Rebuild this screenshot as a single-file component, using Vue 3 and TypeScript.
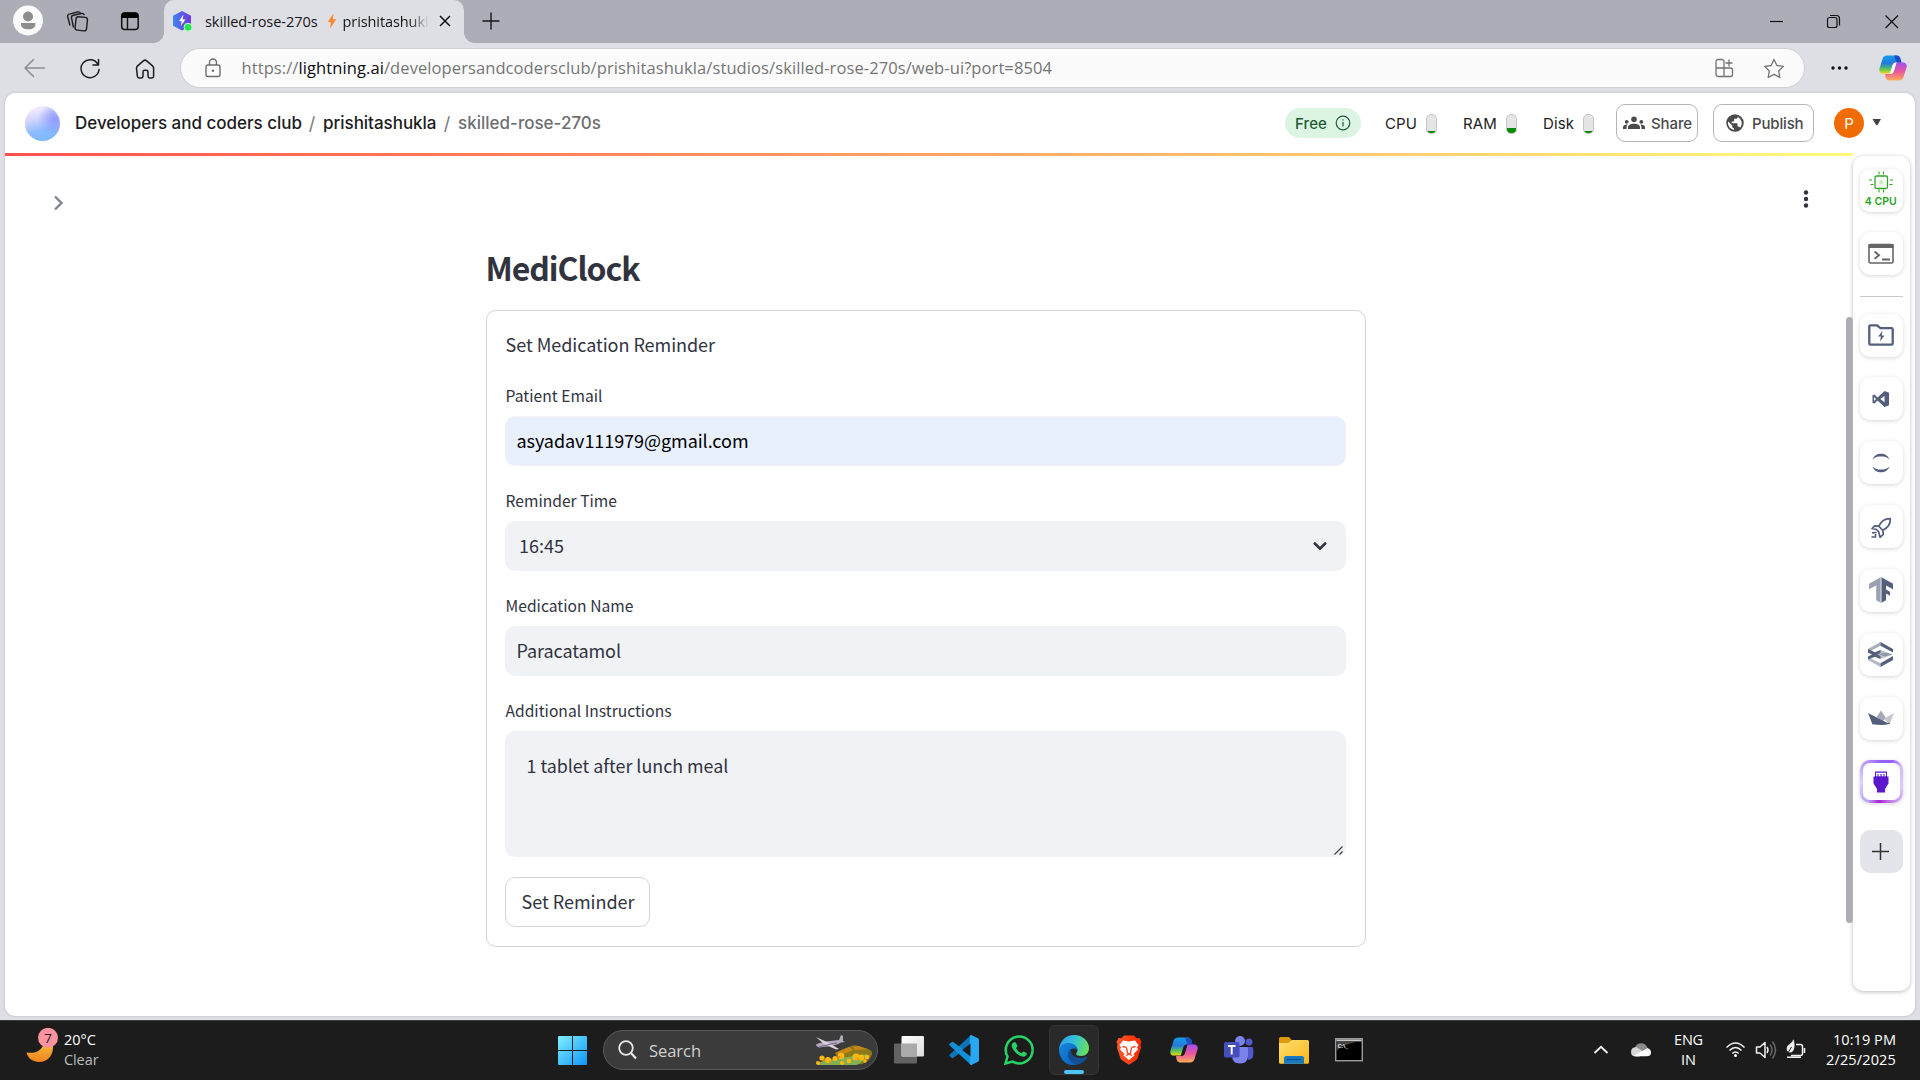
<script setup lang="ts">
import type { Directive } from 'vue'

// Spreads a single-line label over a given width through its letter spacing.
const vFit: Directive<HTMLElement, number> = {
  mounted(el, { value }) {
    const range = document.createRange()
    range.selectNodeContents(el)
    const natural = range.getBoundingClientRect().width
    const count = (el.textContent ?? '').trim().length
    el.style.letterSpacing = `${(value - natural) / count}px`
  },
}

interface Meter { label: string; width: number; level: number; cell: number; gauge: number }
const meters: Meter[] = [
  { label: 'CPU', width: 32, level: 2, cell: 78, gauge: 40.5 },
  { label: 'RAM', width: 34, level: 5, cell: 80, gauge: 42.5 },
  { label: 'Disk', width: 31, level: 2, cell: 73, gauge: 40 },
]
</script>

<template>
  <div class="desktop">
    <header class="tabstrip">
      <svg class="strip-left" width="164" height="43" viewBox="0 0 164 43" fill="none">
        <circle cx="28" cy="20.5" r="15" fill="#fafafa" />
        <circle cx="28" cy="16.5" r="5" fill="#8d8d8d" />
        <path d="M21 23h14.4v1.4c0 3-3 4.900-7.200 4.900s-7.200-1.900-7.200-4.900z" fill="#8d8d8d" />
        <g stroke="#1d1e20" stroke-width="1.400" stroke-linejoin="round">
          <rect x="75.500" y="17" width="11.500" height="13.500" rx="2.500" transform="rotate(6 81 24)" />
          <path d="M73.500 27.500l-2-9.500c-.3-1.500.5-2.500 1.800-2.800l8.400-1.700c1.400-.3 2.300.4 2.700 1.600" />
          <path d="M70 25.500l-2.300-8.700c-.4-1.400.4-2.400 1.600-2.700l8.500-2.100c1.300-.3 2.200.2 2.700 1.300" />
        </g>
        <rect x="121.700" y="13" width="16.500" height="16.500" rx="3" stroke="#111" stroke-width="1.500" />
        <path d="M121.500 18v-2.500a3 3 0 0 1 3-3h10.500a3 3 0 0 1 3 3V18z" fill="#000" />
        <path d="M127.500 18v11.500" stroke="#111" stroke-width="1.400" />
      </svg>
      <div class="tab">
        <svg width="22" height="22" viewBox="0 0 22 22">
          <defs><linearGradient id="fav" x1="0" x2="1"><stop stop-color="#3c86f5" /><stop offset=".5" stop-color="#5a5ae6" /><stop offset="1" stop-color="#7437dd" /></linearGradient></defs>
          <path d="M10 1l9 4.800v10L10 20.500 1 15.800v-10z" fill="url(#fav)" />
          <path d="M11.500 4.500L7 11.200h2.700L8.800 16l4.600-6.500h-2.800z" fill="#fff" />
          <circle cx="16" cy="17.300" r="4" fill="#23e54f" stroke="#c9f5d4" />
        </svg>
        <span v-fit="112.500" class="tab-name">skilled-rose-270s</span>
        <svg width="10" height="16" viewBox="0 0 10 16"><path d="M6.500.5L.7 9h3.100L3 15.500 9.300 6.300H5.800z" fill="#fb8632" /></svg>
        <span class="tab-owner"><span v-fit="94">prishitashukla</span></span>
        <svg class="tab-close" width="12" height="12" viewBox="0 0 12 12"><path d="M1 1l10 10M11 1L1 11" stroke="#111" stroke-width="1.500" /></svg>
      </div>
      <svg class="newtab" width="18" height="18" viewBox="0 0 18 18"><path d="M9 .5v17M.5 9h17" stroke="#161719" stroke-width="1.400" /></svg>
      <svg class="wincontrols" width="130" height="16" viewBox="0 0 130 16" fill="none" stroke="#111" stroke-width="1.200">
        <path d="M0 7.500h13" />
        <rect x="57.500" y="3.500" width="9.500" height="10" rx="2" />
        <path d="M60 1.500h6.500a3 3 0 0 1 3 3v7" />
        <path d="M115.500 1.500l12.500 12.500M128 1.500l-12.500 12.500" />
      </svg>
    </header>

    <nav class="toolbar">
      <svg class="navicons" width="180" height="46" viewBox="0 0 180 46" fill="none" stroke="#1c1d1f" stroke-width="1.500" stroke-linecap="round" stroke-linejoin="round">
        <path d="M44.500 23H25M33.500 14.500L25 23l8.500 8.500" stroke="#8b8d92" />
        <path d="M98 19.500a9 9 0 1 0 1 5M98.500 14.500v5.500H93" />
        <path d="M136.500 23.300c0-1 .4-1.800 1.100-2.400l5.800-5c1-.9 2.300-.9 3.300 0l5.800 5c.7.600 1.100 1.400 1.100 2.400v8c0 1-.7 1.700-1.700 1.700h-2.200c-1 0-1.700-.7-1.700-1.700v-4.300c0-1-.7-1.700-1.700-1.700h-1.600c-1 0-1.700.7-1.700 1.700v4.300c0 1-.7 1.700-1.700 1.700h-2.200c-1 0-1.700-.7-1.700-1.700z" />
      </svg>
      <div class="address">
        <svg width="18" height="20" viewBox="0 0 18 20" fill="none" stroke="#6e6e70" stroke-width="1.400"><rect x="2" y="7" width="14" height="11.500" rx="2" /><path d="M5.500 7V4.500a3.500 3.500 0 0 1 7 0V7" /><circle cx="9" cy="12.700" r="1.200" fill="#6e6e70" stroke="none" /></svg>
        <span v-fit="810.500" class="url">https://<b>lightning.ai</b>/developersandcodersclub/prishitashukla/studios/skilled-rose-270s/web-ui?port=8504</span>
        <svg class="address-actions" width="72" height="22" viewBox="0 0 72 22" fill="none" stroke="#727274" stroke-width="1.300" stroke-linejoin="round">
          <path d="M10 11V4.500a2 2 0 0 0-2-2H4a2 2 0 0 0-2 2V17a2.500 2.500 0 0 0 2.500 2.500h12A2 2 0 0 0 18.500 17.500V13a2 2 0 0 0-2-2H2M10 11v8.500M15 2.500v7M11.500 6h7" />
          <path d="M60 2.500l2.900 6 6.500.9-4.700 4.600 1.100 6.500-5.800-3.100-5.800 3.100 1.100-6.500-4.700-4.600 6.500-.9z" />
        </svg>
      </div>
      <svg class="more" width="20" height="6" viewBox="0 0 20 6" fill="#111"><circle cx="3" cy="3" r="1.700" /><circle cx="9.500" cy="3" r="1.700" /><circle cx="16" cy="3" r="1.700" /></svg>
      <svg width="28" height="28" viewBox="0 0 28 28">
        <defs>
          <linearGradient id="cpA" x1="0" y1="0" x2="0" y2="1"><stop stop-color="#149de8" /><stop offset=".45" stop-color="#2578dc" /><stop offset=".75" stop-color="#5bc45c" /><stop offset="1" stop-color="#f3d516" /></linearGradient>
          <linearGradient id="cpB" x1="0" y1="0" x2="0" y2="1"><stop stop-color="#a74df0" /><stop offset=".5" stop-color="#e6569c" /><stop offset="1" stop-color="#ffac57" /></linearGradient>
        </defs>
        <path d="M8 1.500h9.500c2.500 0 3.500 1.500 4 3.500l1 3.500h-5c-2.300 0-3.500 1-4.100 3L11 19.500H4c-3 0-4.300-2-3.500-5L3.500 5C4.200 2.700 5.500 1.500 8 1.500z" fill="url(#cpA)" />
        <path d="M20 26.500h-9.500c-2.500 0-3.500-1.500-4-3.500l-.5-3h4.500c2.300 0 3.500-1 4.100-3L17 8.500h7c3 0 4.300 2 3.500 5l-3 9.500c-.7 2.300-2 3.500-4.500 3.500z" fill="url(#cpB)" />
        <path d="M13.500 11.500c.6-2 1.800-3 4.100-3L15 17c-.6 2-1.800 3-4.100 3z" fill="#fff" />
        <path d="M15 1.500h2.500c2.500 0 3.500 1.500 4 3.500l1 3.500h-3c-1.500 0-2.500-.8-2.800-2.300z" fill="#1d4cc4" />
      </svg>
    </nav>

    <div class="page">
      <div class="app-header">
        <div class="team"></div>
        <span v-fit="227" class="crumb c1">Developers and coders club</span>
        <span class="slash">/</span>
        <span v-fit="113.500" class="crumb c2">prishitashukla</span>
        <span class="slash">/</span>
        <span v-fit="143" class="crumb current">skilled-rose-270s</span>
        <div class="spacer"></div>
        <div class="free"><span v-fit="32">Free</span>
          <svg width="16" height="16" viewBox="0 0 16 16" fill="none" stroke="#1f5a35" stroke-width="1.200"><circle cx="8" cy="8" r="6.800" /><path d="M8 7v4.500M8 4.300v1.300" /></svg>
        </div>
        <div v-for="m in meters" :key="m.label" class="meter" :style="{ width: m.cell + 'px' }">
          <span v-fit="m.width" class="meter-label" :style="{ width: m.gauge + 'px' }">{{ m.label }}</span>
          <span class="gauge"><i :style="{ height: m.level + 'px' }"></i></span>
        </div>
        <button class="hbtn share">
          <svg width="22" height="14" viewBox="0 0 22 14" fill="#4b4b4b"><circle cx="11" cy="3.300" r="2.800" /><path d="M5 13v-1.500C5 9 7.500 7.800 11 7.800s6 1.200 6 3.700V13z" /><circle cx="3.700" cy="5.800" r="1.900" /><circle cx="18.300" cy="5.800" r="1.900" /><path d="M0 13v-1.700c0-1.700 1.800-2.800 4.600-2.700C3.800 9.500 3.500 10.400 3.500 13zM22 13v-1.700c0-1.700-1.800-2.800-4.600-2.700.8.900 1.100 1.800 1.100 4.400z" /></svg>
          <span v-fit="41">Share</span>
        </button>
        <button class="hbtn publish">
          <svg width="20" height="20" viewBox="0 0 24 24" fill="#4b4b4b"><path d="M12 1.500A10.500 10.500 0 1 0 12 22.500 10.500 10.500 0 0 0 12 1.500zm-1.300 18.900A8.500 8.500 0 0 1 3.500 12c0-.6.100-1.200.2-1.800L8.700 15v1.200c0 1.200 1 2 2 2zm7.300-2.700a2 2 0 0 0-2-1.500h-1v-3c0-.6-.4-1-1-1H8v-2h2c.6 0 1-.5 1-1V7h2.200c1 0 2-1 2-2v-.5A8.500 8.500 0 0 1 18 17.700z" /></svg>
          <span v-fit="51.500">Publish</span>
        </button>
        <div class="user">P</div>
        <svg class="caret" width="10" height="7" viewBox="0 0 10 7"><path d="M.5 0h8.500L5.800 5.600q-1 1-2 0z" fill="#444" /></svg>
      </div>

      <div class="workspace">
        <main class="main">
          <div class="line"></div>
          <div class="main-top">
            <svg width="11" height="16" viewBox="0 0 11 16"><path d="M2 1.500L8.500 8 2 14.500" fill="none" stroke="#808495" stroke-width="2.400" /></svg>
            <svg width="6" height="20" viewBox="0 0 6 20" fill="#31333f"><circle cx="3" cy="3.500" r="2.200" /><circle cx="3" cy="10" r="2.200" /><circle cx="3" cy="16.500" r="2.200" /></svg>
          </div>
          <div class="content">
            <h1 v-fit="154">MediClock</h1>
            <form class="card" @submit.prevent>
              <p v-fit="209.500" class="lead">Set Medication Reminder</p>
              <label><span v-fit="97">Patient Email</span></label>
              <div class="field mail"><span v-fit="232">asyadav111979@gmail.com</span></div>
              <label><span v-fit="111.500">Reminder Time</span></label>
              <div class="field select"><span v-fit="45">16:45</span>
                <svg width="14" height="10" viewBox="0 0 14 10"><path d="M1.800 2.500L7 7.700 12.200 2.500" fill="none" stroke="#31333f" stroke-width="2.600" stroke-linecap="round" /></svg>
              </div>
              <label><span v-fit="128">Medication Name</span></label>
              <div class="field"><span v-fit="104.500">Paracatamol</span></div>
              <label><span v-fit="166">Additional Instructions</span></label>
              <div class="field area"><span>1 tablet after lunch meal</span>
                <svg width="11" height="11" viewBox="0 0 11 11"><path d="M1.500 9.500l8-8M6.500 9.500l3-3" stroke="#444" stroke-width="1.300" /></svg>
              </div>
              <button class="submit"><span v-fit="113">Set Reminder</span></button>
            </form>
          </div>
        </main>
        <div class="scroll"><i></i></div>
        <aside class="side">
          <div class="tool cpu">
            <svg width="26" height="22" viewBox="0 0 26 22" fill="none" stroke="#32a527" stroke-width="1.300"><rect x="7" y="5" width="12.500" height="12.500" rx="1.500" /><circle cx="13.200" cy="11.200" r="2.300" fill="#c6ecc2" stroke="none" /><path d="M11 .5v3M15.500 .5v3M11 18.500v3M15.500 18.500v3M1 9h3M2.500 13.500h3M22 9h3M21.500 13.500h3" stroke-width="1.100" /></svg>
            <span v-fit="32">4 CPU</span>
          </div>
          <div class="tool">
            <svg width="26" height="22" viewBox="0 0 26 22"><rect x="1" y="1.500" width="24" height="18.500" rx="1.500" fill="none" stroke="#666" stroke-width="1.600" /><path d="M.5 1h25v4H.5z" fill="#666" /><path d="M6.500 8.500L11 12.300l-4.500 3.500M14 16.500h8" fill="none" stroke="#666" stroke-width="1.900" /></svg>
          </div>
          <hr />
          <div class="tool">
            <svg width="26" height="22" viewBox="0 0 26 22"><path d="M1.300 2.500a1.200 1.200 0 0 1 1.200-1.200H9l3.500 2.900h11a1.200 1.200 0 0 1 1.200 1.200v14a1.200 1.200 0 0 1-1.200 1.200h-21a1.200 1.200 0 0 1-1.200-1.200z" fill="none" stroke="#545f7c" stroke-width="2.300" /><path d="M14.500 6.800l-4.300 5.800h2.700L12 17.500l4.500-6h-2.800z" fill="#545f7c" /></svg>
          </div>
          <div class="tool">
            <svg width="18" height="16" viewBox="0 0 18 16"><path fill-rule="evenodd" d="M12.500 0L17 1.700v12.600L12.500 16 5.500 9.600 2.500 12.500.5 11.700V4.300l2-.8 3 2.900zM2 5.900v4.200L4 8zm10.500-1.200L8.400 8l4.100 3.300z" fill="#545f7c" /></svg>
          </div>
          <div class="tool">
            <svg width="20" height="20" viewBox="0 0 20 20" fill="#545f7c"><path d="M1.500 6.500C3 2.500 6 .7 10 .7s7 1.800 8.500 5.800C16 4 13.500 3.500 10 3.500S4 4 1.500 6.500zM1.500 13.500c1.500 4 4.500 5.800 8.500 5.800s7-1.800 8.500-5.800C16 16 13.500 16.500 10 16.500S4 16 1.500 13.500z" /></svg>
          </div>
          <div class="tool rocket">
            <svg width="22" height="22" viewBox="0 0 22 22" fill="none" stroke="#545f7c" stroke-width="1.700" stroke-linejoin="round"><path d="M20.300 1.700c-5.300-.3-8.800 2-11.600 7.500l4.100 4.100c5.500-2.800 7.800-6.300 7.500-11.600zM8.700 9.200l-4-.4L2 11.500l5 1.200M12.800 13.300l.5 4-3.300 3-1.200-5.100M7 12.700l2 2.500M6.500 15.500L2 15.800M5.500 17v3H1.500" /></svg>
          </div>
          <div class="tool">
            <svg width="24" height="26" viewBox="0 0 24 26"><path d="M12 0v26l-4.800-2.700V8.500L0 12.300V6.800z" fill="#9aa2b2" /><path d="M12 0l12 6.800v5.500L17 8.500v4l4 2.300v4l-4-2.200v6.700L12 26z" fill="#545f7c" /><path d="M12 0v26" stroke="#d8dbe1" stroke-width="1.200" /></svg>
          </div>
          <div class="tool">
            <svg width="25" height="25" viewBox="0 0 25 25"><path d="M0 7l12.500-7v3.800L3 8.800 0 8z" fill="#a9b0bc" /><path d="M12.500 0L25 7v3.500L12.500 3.800z" fill="#545f7c" /><path d="M0 15l12.500 6.300V25L0 18z" fill="#b4bac5" /><path d="M12.500 25L25 18v-4l-12.500 7.300z" fill="#545f7c" /><path d="M12.500 8L25 12.500 12.500 17 9 12.500z" fill="#bcc1ca" /><path d="M0 7l7 3.200L12.500 8v3l-3 1.500 3 1.500v3L7 14.800 0 17.500v-3l4-2-4-2z" fill="#545f7c" /><path d="M11 12.500l6-1.800 7.500 1.800-7.500 1.700z" fill="#8d95a4" /></svg>
          </div>
          <div class="tool">
            <svg width="26" height="16" viewBox="0 0 26 16"><path d="M8.500 7L13 .5 18 8l-3 3z" fill="#a2a8b4" /><path d="M26 3l-10 5.500 5.500 6z" fill="#c3c7ce" /><path d="M0 3l21.500 11-17 .5z" fill="#545f7c" /><path d="M4 13.500q9 2.800 17.500.3l.5-1z" fill="#545f7c" /></svg>
          </div>
          <div class="tool active">
            <svg width="16" height="22" viewBox="0 0 16 22"><path d="M2 .5h12v5h1.500v7L12 18v3.500H4V18L.5 12.500v-7H2z" fill="#5a17cc" /><path d="M3 1.800h10v3.500H3z" fill="#fff" /><path d="M5 3v2.500M8 3v2.500M11 3v2.500" stroke="#5a17cc" stroke-width="1.100" /></svg>
          </div>
          <div class="tool add">
            <svg width="17" height="17" viewBox="0 0 17 17"><path d="M8.500 0v17M0 8.500h17" stroke="#333" stroke-width="1.500" /></svg>
          </div>
        </aside>
      </div>
    </div>

    <footer class="taskbar">
      <div class="weather">
        <svg width="36" height="40" viewBox="0 0 36 40">
          <defs><linearGradient id="moon" x1="0" y1="0" x2="0" y2="1"><stop stop-color="#f5c13a" /><stop offset="1" stop-color="#f0821e" /></linearGradient></defs>
          <path d="M27 16c1 11-5 18-14 18C7 34 2 30.500 .5 24.500 9 26 16.500 23 18 14z" fill="url(#moon)" />
          <circle cx="22" cy="9.800" r="10" fill="#ff93a0" />
          <text x="22" y="14.600" text-anchor="middle" font-size="13.500" fill="#1a1a1a">7</text>
        </svg>
        <div class="temp"><span v-fit="32">20°C</span><span v-fit="34.500" class="dim">Clear</span></div>
      </div>
      <svg class="start" width="29" height="29" viewBox="0 0 29 29"><defs><linearGradient id="win" x1="0" y1="0" x2="1" y2="1"><stop stop-color="#7ff0ff" /><stop offset="1" stop-color="#0f95f8" /></linearGradient></defs><path d="M1 0h13v14H0V1q0-1 1-1zM15 0h13q1 0 1 1v13H15zM0 15h14v14H1q-1 0-1-1zM15 15h14v13q0 1-1 1H15z" fill="url(#win)" /></svg>
      <div class="search">
        <svg width="19" height="20" viewBox="0 0 19 20" fill="none" stroke="#e6e6e6"><circle cx="8" cy="8" r="6.800" stroke-width="1.800" /><path d="M13 13l5 5.500" stroke-width="2.200" /></svg>
        <span v-fit="52">Search</span>
        <svg class="flora" width="58" height="32" viewBox="0 0 58 32">
          <path d="M20 18q8-4 14-6 5-3 10-.5l8 2q6 2 5 6-4 10-15 10H26z" fill="#8c7a1a" />
          <path d="M38 12l6-1 8 3-12 1zM20 18l14-6 4 3-9 4z" fill="#cc8618" />
          <path d="M2 29q10-6 20-5 14-3 30-5-3 9-11 11H3z" fill="#83b053" />
          <g fill="#fdb910"><circle cx="7" cy="23" r="2.600" /><circle cx="13" cy="25" r="3" /><circle cx="20" cy="23.500" r="2.500" /><circle cx="26" cy="21" r="3.300" /><circle cx="34" cy="26" r="2.300" /><circle cx="41" cy="22" r="3.500" /><circle cx="46" cy="22.500" r="3" /><circle cx="52" cy="22" r="2.300" /><circle cx="3" cy="28" r="2" /><circle cx="27" cy="28" r="2" /><circle cx="50" cy="26" r="1.800" /></g>
          <g fill="#ef9410"><circle cx="15" cy="27" r="1.200" /><circle cx="24" cy="22" r="1.200" /><circle cx="43" cy="24" r="1.200" /><circle cx="9" cy="25" r="1" /></g>
          <path d="M1 9.500q5-2.500 14-3.500l9-1 2-5 2 1v5l2 1-4 .5q-3 2-10 3.500L4 12.500q-3-1-3-3z" fill="#b5aabd" />
          <path d="M1 2l13 6 10 6-3 .5L9 9z" fill="#ddd2df" /><path d="M4 12l12-3 6-1" stroke="#76698a" fill="none" />
        </svg>
      </div>
      <div class="apps">
        <div class="app"><svg width="30" height="28" viewBox="0 0 30 28"><defs><linearGradient id="tv" x1="0" y1="0" x2="1" y2="1"><stop stop-color="#fff" /><stop offset="1" stop-color="#dcdcdc" /></linearGradient></defs><rect x="0" y="7.500" width="23" height="20" rx="1" fill="#626262" /><rect x="7.500" y="0" width="22.500" height="20.500" rx="1" fill="url(#tv)" /><path d="M7.500 7.500H23v13H8.500q-1 0-1-1z" fill="#aaa" /></svg></div>
        <div class="app"><svg width="30" height="30" viewBox="0 0 30 30"><path d="M22 0L1 19.200q-1.200 1 0 2.200l1.500 1.400q1 .7 2 0L30 4z" fill="#0e73b8" /><path d="M22 30L1 10.800q-1.200-1 0-2.200l1.500-1.400q1-.7 2 0L30 26z" fill="#118fd8" /><path d="M22 0l6.800 3.200Q30 4 30 5.200v19.600q0 1.200-1.200 2L22 30q-1 .3-1.200-1.500V1.500Q21 0 22 0z" fill="#2aa7f2" /><path d="M21.500 8.500v13L13.200 15z" fill="#1c1c1c" /></svg></div>
        <div class="app"><svg width="30" height="30" viewBox="0 0 30 30"><path d="M1.500 28.500l2-7A13.400 13.400 0 1 1 8.600 26.600z" fill="none" stroke="#27d366" stroke-width="2.500" /><path d="M10.300 7.300c-.7-.2-2.500 1-2.600 3.200 0 2 1.400 4.200 3.400 6.400 2.600 2.900 5.300 4.800 8.200 4.900 2.300 0 3.500-1.400 3.500-3.200 0-.5-3-2.100-3.500-2.100s-1.300 1.900-2 1.800c-1.500-.4-4.300-2.800-5.100-4.700-.3-.7 1.200-1.600 1.200-2.300 0-.6-1.200-3.400-1.800-3.800-.3-.2-.9-.2-1.300-.2z" fill="#27d366" /></svg></div>
        <div class="app current"><svg width="30" height="30" viewBox="0 0 30 30">
          <defs><linearGradient id="eg1" x1="0" y1=".3" x2="1" y2=".5"><stop stop-color="#2b9cf0" /><stop offset=".5" stop-color="#35c3d5" /><stop offset="1" stop-color="#6ae05b" /></linearGradient><linearGradient id="eg2" x1="0" y1="0" x2="1" y2="1"><stop stop-color="#1486dd" /><stop offset="1" stop-color="#0a62bd" /></linearGradient></defs>
          <path d="M0 14.500C.5 6 7 0 15 0c9 0 15 6.500 15 13 0 5-3.500 8-7.500 8-3.200 0-5.300-1-5.300-2.300 0-1 1.300-1.400 1.300-3.700 0-3-3.500-5.500-8-5.500-4 0-8 1.500-10.500 5z" fill="url(#eg1)" />
          <path d="M0 14.500C2 9.500 6 7.500 10.500 8c4.500.5 8 3.300 8 7-2-2.500-8-2-9 3-.8 5 3.500 9 8.500 11.700C7 32 0 24 0 14.500z" fill="url(#eg2)" />
          <path d="M10 16c-3 6 1 12 7.500 13.800 4.500-.6 8.500-3.500 10.700-7.300.3-.6-.2-1-.8-.7-7 3.200-16 .2-15.300-6.800z" fill="#144e93" />
        </svg><i></i></div>
        <div class="app"><svg width="26" height="30" viewBox="0 0 26 30"><defs><linearGradient id="br" x1="0" x2="1"><stop stop-color="#ff5a2a" /><stop offset="1" stop-color="#ff2600" /></linearGradient></defs><path d="M8 .5h10l2.500 2.800 3-.3 2 4-1 3 .5 2.500-3.500 11Q21 25 13 29.700 5 25 4.500 23.500L1 12.500l.5-3-1-2.500 2-4 3 .3z" fill="url(#br)" /><path d="M7 5.500l6 1 6-1 3.500 4.500-1.500 2.500 1 2-4.500 4.500 1 1.500-5.500 4.500L7.500 20.500l1-1.500L4 14.500l1-2L3.500 10z" fill="#fff" /><path d="M6.500 11.500l4 .8M19.500 11.500l-4 .8M10.500 12.500l1 5.500 1.500 1 1.500-1 1-5.500M10 20.500l3-1.500 3 1.500" fill="none" stroke="#ff4018" stroke-width="1.300" /></svg></div>
        <div class="app"><svg width="28" height="26" viewBox="0 1 28 26"><path d="M8 1.500h9.500c2.500 0 3.500 1.500 4 3.500l1 3.500h-5c-2.300 0-3.500 1-4.100 3L11 19.500H4c-3 0-4.300-2-3.500-5L3.500 5C4.200 2.700 5.500 1.500 8 1.500z" fill="url(#cpA)" /><path d="M20 26.500h-9.500c-2.500 0-3.500-1.500-4-3.500l-.5-3h4.500c2.300 0 3.500-1 4.100-3L17 8.500h7c3 0 4.300 2 3.500 5l-3 9.500c-.7 2.300-2 3.500-4.500 3.500z" fill="url(#cpB)" /><path d="M13.500 11.500c.6-2 1.800-3 4.100-3L15 17c-.6 2-1.800 3-4.100 3z" fill="#1c1c1c" /><path d="M15 1.500h2.500c2.500 0 3.500 1.500 4 3.500l1 3.500h-3c-1.500 0-2.500-.8-2.800-2.300z" fill="#1d4cc4" /></svg></div>
        <div class="app"><svg width="30" height="28" viewBox="0 0 30 28"><circle cx="25" cy="6" r="3.500" fill="#5059c9" /><path d="M20 11h7.500q1.800 0 1.800 1.800v5.700q0 4.500-5 5.500z" fill="#5059c9" /><circle cx="16" cy="5" r="5" fill="#7b83eb" /><path d="M9 11h13.500q1.500 0 1.500 1.500v7q0 8-8 8t-8-8z" fill="#7b83eb" /><rect x="0" y="6" width="15.500" height="15.500" rx="1.500" fill="#454ebd" /><path d="M4 10h7.500M7.700 10v8.500" stroke="#fff" stroke-width="1.900" /></svg></div>
        <div class="app"><svg width="30" height="27" viewBox="0 0 30 27"><defs><linearGradient id="fo" x1="0" y1="0" x2="1" y2="1"><stop stop-color="#ffdf70" /><stop offset="1" stop-color="#f9b71c" /></linearGradient></defs><path d="M0 1.500Q0 0 1.500 0H10l3 3.500V8H0z" fill="#dd9a0b" /><path d="M0 6h9l4-3h15.500Q30 3 30 4.500v20.700q0 1.500-1.500 1.500H1.500Q0 26.700 0 25.200z" fill="url(#fo)" /><path d="M5 26.700v-5.500q0-2.200 2.200-2.200h15.600q2.200 0 2.200 2.200v5.500z" fill="#1579c4" /><path d="M8 22.500h14" stroke="#0e4c89" stroke-width="1.300" /></svg></div>
        <div class="app"><svg width="28" height="24" viewBox="0 0 28 24"><rect x=".7" y=".7" width="26.600" height="22" fill="#000" stroke="#9b9b9b" stroke-width="1.400" /><path d="M1.400 1.400h25.200v2H1.400z" fill="#c8c8c8" /><path d="M1.400 3.400h25.200q-14 .5-25.200 9z" fill="#444" /><text x="2.500" y="9.500" font-size="6" font-weight="700" fill="#ddd">C:\_</text></svg></div>
      </div>
      <div class="tray">
        <svg width="16" height="10" viewBox="0 0 16 10"><path d="M1.500 8L8 1.800 14.500 8" fill="none" stroke="#f0f0f0" stroke-width="1.900" /></svg>
        <svg class="cloud" width="22" height="14" viewBox="0 0 22 14"><path d="M5 4.500Q7 .3 11 .3q5 0 6.500 4.700L10 9z" fill="#8b8b8b" /><path d="M1 9q0-4.500 5-5l10 6-7 3.500H5Q1 13 1 9z" fill="#d5d5d5" /><path d="M4 12.500L17.500 5Q21 6 21 9.500q0 3.800-4 3.800H5.500z" fill="#fff" /></svg>
        <div class="lang"><span v-fit="29">ENG</span><span v-fit="15">IN</span></div>
        <svg class="status" width="82" height="22" viewBox="0 0 82 22" fill="none" stroke="#f2f2f2" stroke-width="1.500">
          <path d="M1.500 8.500q9-9 18 0M4.500 11.500q6-6 12 0M7.300 14.500q3.200-3 6.400 0" /><circle cx="10.500" cy="16.500" r="1.500" fill="#fff" stroke="none" />
          <path d="M31.500 8h3.500l5-4.500v15L35 14h-3.500zM42 8q2 3 0 6" stroke-linejoin="round" /><path d="M45 5.500q4 5.500 0 11M47.500 2.500q6 8.500 0 17" stroke="#666" />
          <path d="M71 5.500h4.500q2 0 2 2v7q0 2-2 2H66M62 18.300h14M79.500 9v5" /><path d="M68.500 .8q2 9-1.500 12-2.800 1.200-4.500-.8-1.700-4.500 2.300-6.700Q67.500 3.800 68.500.8z" fill="#f2f2f2" stroke-width=".6" /><path d="M66.500 8l-4.500 7.500" stroke="#1c1c1c" stroke-width="1" />
        </svg>
        <div class="clock"><span v-fit="63">10:19 PM</span><span v-fit="70">2/25/2025</span></div>
      </div>
    </footer>
  </div>
</template>

<style>
body { margin: 0; overflow: hidden; }
</style>

<style scoped>
.desktop { width: 1920px; height: 1080px; display: flex; flex-direction: column; background: #dedfe4; font-family: "Open Sans", "Noto Sans", sans-serif; overflow: hidden; }
.desktop * { box-sizing: border-box; }
svg { display: block; flex: none; }
span { white-space: nowrap; }
button { font: inherit; padding: 0; background: #fff; }

.tabstrip { height: 43px; flex: none; background: #abaeb7; display: flex; align-items: flex-start; }
.tab { position: relative; width: 300px; height: 43px; background: #dedfe4; border-radius: 10px 10px 0 0; display: flex; align-items: center; padding: 0 0 1px 8px; font-size: 14.500px; color: #161616; }
.tab::before, .tab::after { content: ""; position: absolute; bottom: 0; width: 10px; height: 10px; }
.tab::before { left: -10px; background: radial-gradient(circle at 0 0, transparent 9.500px, #dedfe4 10px); }
.tab::after { right: -10px; background: radial-gradient(circle at 100% 0, transparent 9.500px, #dedfe4 10px); }
.tab-name { width: 122px; margin-left: 11px; }
.tab-owner { width: 86px; margin-left: 5.500px; overflow: hidden; mask-image: linear-gradient(90deg, #000 78%, transparent); }
.tab-close { margin-left: 10px; }
.newtab { margin: 12px 0 0 18px; }
.wincontrols { margin: 14px 20px 0 auto; }

.toolbar { height: 50px; flex: none; display: flex; align-items: center; }
.address { width: 1625px; height: 40px; border: 1.500px solid #cfd0d3; border-radius: 20px; background: #fbfbfc; display: flex; align-items: center; padding-left: 23px; }
.url { margin-left: 19.500px; width: 900px; font-size: 16.500px; line-height: 38px; color: #757576; }
.url b { font-weight: 400; color: #0c0c0c; }
.address-actions { margin: 0 18px 0 auto; }
.more { margin: 0 29px 0 25px; }

.page { width: 1910px; height: 923px; margin-left: 5px; flex: none; background: #fff; border-radius: 10px; box-shadow: 0 0 3px #b9bac0; display: flex; flex-direction: column; overflow: hidden; font-family: Inter, Roboto, sans-serif; }
.app-header { height: 60px; flex: none; display: flex; align-items: center; padding-left: 20px; color: #1c1c1e; font-size: 17px; }
.team { width: 35px; height: 35px; border-radius: 50%; flex: none; background: radial-gradient(circle at 85% 38%, #8f9bff 0, transparent 45%), linear-gradient(165deg, #f3eafd 12%, #c9cffc 42%, #8abcff 65%, #78b9ff); }
.crumb { font-weight: 500; flex: none; }
.c1 { width: 226px; margin-left: 15px; }
.c2 { width: 113px; }
.slash { width: 22px; text-align: center; font-size: 18px; color: #77777a; flex: none; }
.current.crumb { font-weight: 500; color: #6e6e71; width: 145px; }
.spacer { flex: 1; }
.free { width: 76px; height: 30px; margin-right: 24px; border-radius: 15px; background: #dcf5e2; color: #1f5a35; font-size: 15px; font-weight: 500; display: flex; align-items: center; justify-content: space-between; padding: 0 10px; flex: none; }
.meter { display: flex; align-items: center; font-size: 15px; flex: none; }
.meter-label { flex: none; color: #222; }
.gauge { width: 11px; height: 20px; margin-top: 1px; border-radius: 5px; border: 1px solid #c5c5c5; background: #e5e5e5; display: flex; align-items: flex-end; overflow: hidden; }
.gauge i { width: 100%; background: #078a07; display: block; }
.hbtn { height: 38px; border: 1px solid #b5b5b7; border-radius: 9px; display: flex; align-items: center; flex: none; font-size: 15px; font-weight: 500; color: #4a4a4c; }
.share { width: 82px; padding-left: 6px; gap: 6px; }
.publish { width: 101px; margin-left: 15px; padding-left: 11px; gap: 7px; }
.user { width: 30px; height: 30px; border-radius: 50%; margin-left: 20px; background: #f06c00; color: #fff; display: flex; align-items: center; justify-content: center; font-size: 15px; flex: none; }
.caret { margin: -2px 33px 0 8px; }

.workspace { flex: 1; display: flex; min-height: 0; }
.main { width: 1841px; display: flex; flex-direction: column; position: relative; }
.line { height: 3px; width: 1848px; flex: none; background: linear-gradient(90deg, #ff5050, #ff9560 42%, #ffc56c 70%, #fffb7d); }
.main-top { display: flex; justify-content: space-between; padding: 32.500px 37.500px 0 48px; height: 74px; }
.main-top svg:first-child { margin-top: 6px; }
.content { width: 880px; margin-left: 481px; font-family: "Noto Sans CJK SC", "Noto Sans", sans-serif; color: #31333f; display: flex; flex-direction: column; }
h1 { margin: 13px 0 18px -.5px; height: 49px; line-height: 49px; font-size: 32px; font-weight: 600; }
.card { height: 637px; border: 1px solid #d4d5d8; border-radius: 10px; padding: 0 19px 0 18px; font-size: 18px; display: flex; flex-direction: column; }
.lead { margin: 18px 0 22px .5px; height: 30px; line-height: 30px; }
label { height: 35px; line-height: 28px; padding: 0 0 0 .5px; font-size: 15.600px; }
.field + label { margin-top: 20px; }
.field { height: 50px; flex: none; background: #f0f2f6; border-radius: 10px; padding: 0 11.500px 2px; display: flex; align-items: center; }
.mail { background: #e8f0fe; color: #000; border: 1px solid #f0f2f6; padding: 0 10.500px 2px; }
.select { padding: 0 19px 2px 14px; justify-content: space-between; }
.select svg { margin-top: 2px; }
.area { height: 126px; align-items: flex-start; justify-content: space-between; padding: 19px 2px 0 21.500px; line-height: 30px; font-size: 17.850px; }
.area svg { align-self: flex-end; margin-bottom: 1px; }
.submit { width: 145px; height: 50px; margin-top: 20px; border: 1px solid #d4d5d8; border-radius: 10px; color: #31333f; flex: none; padding: 0 0 2px 1px; }

.scroll { width: 7px; padding-top: 164px; }
.scroll i { display: block; width: 7px; height: 606px; background: #adadb3; border-radius: 4px; }
.side { width: 57px; height: 835px; margin-top: 3px; border-radius: 10px; background: #fff; box-shadow: 0 1px 4px #b9babe; display: flex; flex-direction: column; align-items: center; padding-top: 12.500px; gap: 20.850px; }
.tool { width: 43px; height: 43px; flex: none; border-radius: 10px; background: #fff; box-shadow: 0 1px 4px rgba(0, 0, 0, .16); display: flex; align-items: center; justify-content: center; padding: 0 1.500px 0 0; }
.cpu { flex-direction: column; font-size: 10.500px; font-weight: 600; color: #2ba31f; line-height: 14px; gap: 2px; }
.rocket { padding: 2px 1.500px 0 0; }
hr { width: 43px; height: 1px; border: 0; background: #c9cacd; margin: -.5px 0 -4px; flex: none; }
.active { border: 3px solid transparent; background: linear-gradient(#fff, #fff) padding-box, conic-gradient(#9560ff 0 8%, #cfbbff 14%, #dfcbff 30%, #c785e8 42%, #a91ed4 52%, #bba7f8 60%, #e1d2ff 75%, #b393ff 90%, #9560ff) border-box; }
.add { margin-top: 6px; background: #e4e5ea; box-shadow: none; }

.taskbar { height: 60px; margin-top: 4px; flex: none; background: #1c1c1c; border-top: 1px solid #393b3d; display: flex; align-items: center; padding-bottom: 1px; color: #fff; font-size: 14.500px; }
.weather { display: flex; width: 558px; padding-left: 26px; margin-top: -2px; }
.temp { margin-left: 2px; padding-top: 1.500px; display: flex; flex-direction: column; line-height: 20px; }
.dim { color: #bcbcbc; }
.start { margin-right: 16px; }
.search { width: 275px; height: 40px; border-radius: 20px; background: #3b3b3b; border: 1px solid #5a5a5a; display: flex; align-items: center; padding: 0 4px 0 14px; font-size: 16.500px; color: #d2d2d2; }
.search span { margin-left: 12px; }
.flora { margin: 2px 0 0 auto; }
.apps { display: flex; margin-left: 6px; gap: 5px; }
.app { width: 50px; height: 50px; display: flex; align-items: center; justify-content: center; border-radius: 6px; position: relative; }
.app.current { background: #292929; border: 1px solid #353535; }
.app.current i { position: absolute; left: 14px; bottom: 0; width: 20px; height: 4px; border-radius: 2px; background: #4cc2ff; }
.tray { margin: -1px 24px 0 auto; display: flex; align-items: center; }
.cloud { margin-left: 21px; }
.lang { width: 30px; margin: 0 21.500px 0 21.500px; display: flex; flex-direction: column; align-items: center; line-height: 20px; }
.clock { width: 72px; margin-left: 17px; display: flex; flex-direction: column; align-items: flex-end; line-height: 20px; }
</style>
